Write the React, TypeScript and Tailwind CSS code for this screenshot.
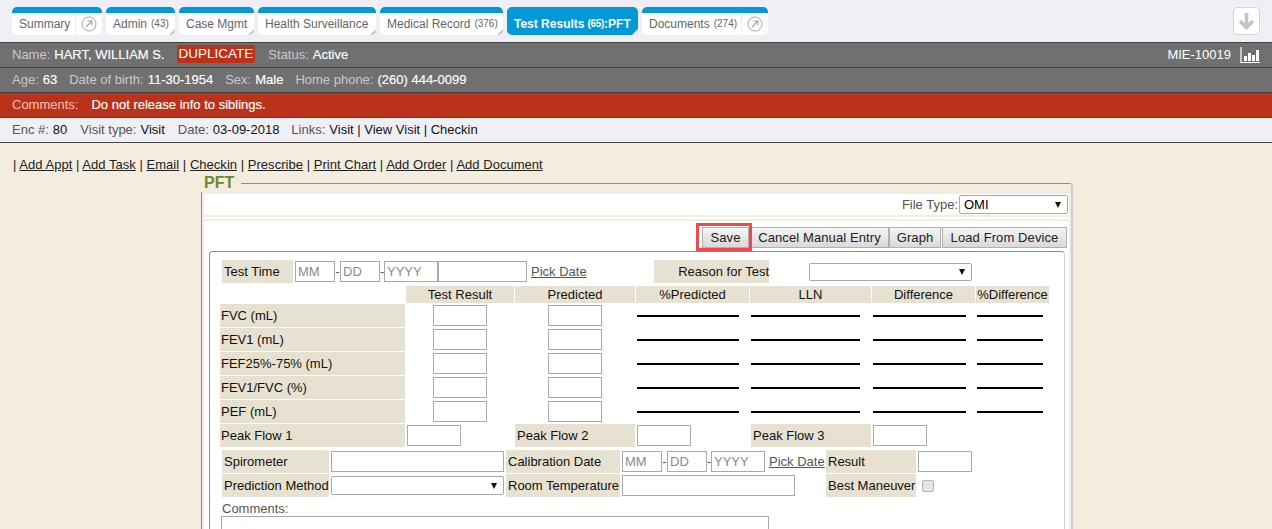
import type { ReactNode } from "react";

const tabs = [
  { name: "Summary", link: true, width: "w-[90px]" },
  { name: "Admin", count: "(43)", width: "w-[69px]" },
  { name: "Case Mgmt", width: "w-[75px]" },
  { name: "Health Surveillance", width: "w-[118px]" },
  { name: "Medical Record", count: "(376)", width: "w-[123px]" },
  { name: "Test Results", count: "(65)", suffix: ":PFT", active: true, width: "w-[131px]" },
  { name: "Documents", count: "(274)", link: true, width: "w-[126px]" },
];

const measures = ["FVC (mL)", "FEV1 (mL)", "FEF25%-75% (mL)", "FEV1/FVC (%)", "PEF (mL)"];

function LinkIcon() {
  return (
    <svg width="16" height="16" viewBox="0 0 16 16" fill="none" stroke="#a3a3a3">
      <circle cx="8" cy="8" r="7" strokeWidth="1" />
      <path d="M5 11 L11 5 M6.5 5 H11 V9.5" strokeWidth="1.1" />
    </svg>
  );
}

function Tab({ tab }: { tab: (typeof tabs)[number] }) {
  return (
    <div
      className={`relative flex h-[28px] shrink-0 items-center overflow-hidden rounded-[5px] border-t-[6px] border-[#0398d8] ${tab.width} ${
        tab.active ? "bg-[#0398d8] font-bold text-white" : "bg-white text-[#666]"
      }`}
    >
      <div className="flex h-full flex-1 items-center whitespace-nowrap pb-[1px] pl-[7px]">
        {tab.name}
        {tab.count && <span className={`text-[10px] ${tab.active ? "ml-[3px] tracking-[-0.3px]" : "ml-[4px]"}`}>{tab.count}</span>}
        {tab.suffix}
      </div>
      {tab.link ? (
        <div className="flex h-full w-[27px] items-center justify-center border-l border-[#ececec]">
          <LinkIcon />
        </div>
      ) : (
        <svg className="absolute bottom-0 right-0" width="6" height="6" viewBox="0 0 6 6">
          <path d="M6 0 V6 H0 Z" fill={tab.active ? "#fff" : "#c4c4c4"} />
        </svg>
      )}
    </div>
  );
}

function Val({ children }: { children: ReactNode }) {
  return <span className="ml-[4px] text-white [-webkit-text-stroke:0.15px_#fff]">{children}</span>;
}

function Label({ className = "", children }: { className?: string; children: ReactNode }) {
  return (
    <div className={`flex h-[23px] shrink-0 items-center whitespace-nowrap bg-[#e7e1d1] pl-[2px] text-[#111] ${className}`}>
      {children}
    </div>
  );
}

function Field({ className = "", placeholder }: { className?: string; placeholder?: string }) {
  return (
    <input
      placeholder={placeholder}
      className={`h-[21px] shrink-0 border border-[#a9a9a9] bg-white px-[2px] text-[13px] outline-none placeholder:text-[#8a8a8a] ${className}`}
    />
  );
}

function Picker({ className = "", value }: { className?: string; value?: string }) {
  return (
    <div className={`relative shrink-0 ${className}`}>
      <select className="h-full w-full appearance-none rounded-[2px] border border-[#a9a9a9] bg-white pl-[4px] text-[13px] text-black outline-none">
        {value && <option>{value}</option>}
      </select>
      <svg className="absolute right-[7px] top-1/2 -translate-y-1/2" width="6" height="6" viewBox="0 0 6 6">
        <path d="M0 0 H6 L3 6 Z" fill="#111" />
      </svg>
    </div>
  );
}

function DateFields() {
  return (
    <>
      <Field className="ml-[2px] w-[40px]" placeholder="MM" />
      <span className="w-[5px] text-center text-[#555]">-</span>
      <Field className="w-[40px]" placeholder="DD" />
      <span className="w-[4px] text-center text-[#555]">-</span>
      <Field className="w-[54px]" placeholder="YYYY" />
    </>
  );
}

function ActionButton({ className = "", children }: { className?: string; children: ReactNode }) {
  return (
    <button className={`h-[21px] shrink-0 border border-[#b0b0b0] bg-gradient-to-b from-[#f5f5f5] to-[#d9d9d9] text-[13px] tracking-[0.1px] text-[#222] ${className}`}>
      {children}
    </button>
  );
}

export default function App() {
  return (
    <div className="h-[529px] w-[1272px] overflow-hidden bg-[#f4ecdf] font-['Liberation_Sans',Arial,sans-serif] text-[13px] leading-none">
      {/* Tabs */}
      <div className="flex h-[42px] items-start bg-[#efeff5] pl-[12px] pt-[7px] text-[12px]">
        <div className="flex gap-[4px]">
          {tabs.map((tab) => (
            <Tab key={tab.name} tab={tab} />
          ))}
        </div>
        <div className="ml-auto mr-[12px] flex h-[28px] w-[27px] items-center justify-center rounded-[4px] border border-[#d4d4d4] bg-white">
          <svg width="17" height="18" viewBox="0 0 17 18" fill="none" stroke="#c4c4c4" strokeWidth="3.6">
            <path d="M8.5 1 V15 M2 9 L8.5 15.5 L15 9" />
          </svg>
        </div>
      </div>

      {/* Patient banner */}
      <div className="flex h-[25px] items-center border-t border-[#444] bg-[#707070] pb-[2px] pl-[12px] pr-[12px] text-[#c9c9c9]">
        Name:
        <Val>HART, WILLIAM S.</Val>
        <span className="ml-[12px] rounded-[3px] bg-[#bc311a] px-[2px] py-[2px] text-[13.5px] text-white">DUPLICATE</span>
        <span className="ml-[13px]">Status:</span>
        <Val>Active</Val>
        <span className="ml-auto text-white">MIE-10019</span>
        <svg className="ml-[9px] mt-[2px]" width="20" height="17" viewBox="0 0 20 17" fill="none">
          <path d="M1 0 V15.5 H20" stroke="#fff" strokeWidth="1.2" />
          <path d="M4 14 V9 H7 V14 Z M8 14 V6 H11 V14 Z M12 14 V8 H15 V14 Z M16 14 V3 H19 V14 Z" fill="#fff" />
        </svg>
      </div>
      <div className="flex h-[25px] items-center border-t border-[#444] bg-[#707070] pb-[2px] pl-[12px] text-[#c9c9c9]">
        Age:
        <Val>63</Val>
        <span className="ml-[12px]">Date of birth:</span>
        <Val>11-30-1954</Val>
        <span className="ml-[12px]">Sex:</span>
        <Val>Male</Val>
        <span className="ml-[12px]">Home phone:</span>
        <Val>(260) 444-0099</Val>
      </div>
      <div className="flex h-[25px] items-center border-t border-[#444] bg-[#bc311a] pb-[2px] pl-[12px] text-[#f3c4b8]">
        Comments:
        <span className="ml-[13px] text-white [-webkit-text-stroke:0.15px_#fff]">Do not release info to siblings.</span>
      </div>
      <div className="flex h-[26px] items-center border-y border-[#444] bg-[#efeff5] pb-[2px] pl-[12px] text-[#555]">
        Enc #:
        <span className="ml-[4px] text-[#111]">80</span>
        <span className="ml-[13px]">Visit type:</span>
        <span className="ml-[4px] text-[#111]">Visit</span>
        <span className="ml-[13px]">Date:</span>
        <span className="ml-[4px] text-[#111]">03-09-2018</span>
        <span className="ml-[12px]">Links:</span>
        <span className="ml-[4px] text-[#111]">Visit | View Visit | Checkin</span>
      </div>

      {/* Quick links */}
      <div className="flex h-[40px] items-end pb-[12px] pl-[13px] tracking-[0.03px] text-[#222]">
        <span className="whitespace-pre">
          {"| "}
          <u>Add Appt</u>
          {" | "}
          <u>Add Task</u>
          {" | "}
          <u>Email</u>
          {" | "}
          <u>Checkin</u>
          {" | "}
          <u>Prescribe</u>
          {" | "}
          <u>Print Chart</u>
          {" | "}
          <u>Add Order</u>
          {" | "}
          <u>Add Document</u>
        </span>
      </div>

      {/* PFT panel */}
      <div className="relative ml-[201px] w-[872px] rounded-tr-[4px] border-l border-r-2 border-t border-[#8c8c8c] border-r-[#cfcfcf] px-[2px] pt-[10px]">
        <div className="absolute left-[-1px] top-[-10px] bg-[#f4ecdf] pl-[3px] pr-[7px] text-[16px] font-bold leading-[18px] text-[#6b8a2c]">
          PFT
        </div>
        <div className="flex h-[21px] items-center justify-end bg-white pr-[1px] text-[#555]">
          File Type:
          <Picker className="ml-[1px] h-[19px] w-[109px]" value="OMI" />
        </div>
        <div className="h-[2px]" />
        <div className="h-[2px] bg-white" />
        <div className="h-[2px]" />

        <div className="bg-white pb-[40px]">
          <div className="flex h-[27px] items-end justify-end pr-[2px]">
            <div className="relative flex">
              <ActionButton className="mr-[1px] w-[47px]">Save</ActionButton>
              <div className="absolute left-[-6px] top-[-4px] h-[28px] w-[56px] border-[3px] border-[#f0484e]" />
              <ActionButton className="w-[139px]">Cancel Manual Entry</ActionButton>
              <ActionButton className="mr-[1px] w-[52px]">Graph</ActionButton>
              <ActionButton className="w-[125px]">Load From Device</ActionButton>
            </div>
          </div>

          <div className="ml-[5px] mr-[4px] mt-[3px] rounded-[4px] border border-[#8c8c8c] border-r-[#cfcfcf] pt-[8px] text-[#111]">
            {/* Test time */}
            <div className="flex h-[23px] items-center pl-[12px]">
              <Label className="w-[71px]">Test Time</Label>
              <DateFields />
              <Field className="w-[89px]" />
              <u className="ml-[4px] w-[55px] shrink-0 whitespace-nowrap text-[#555]">Pick Date</u>
              <Label className="ml-[68px] w-[115px] justify-end pl-0">Reason for Test</Label>
              <Picker className="ml-[40px] h-[18px] w-[163px]" />
            </div>

            {/* Column heads */}
            <div className="mt-[3px] flex h-[17px] gap-[1px] pl-[196px] text-center">
              <div className="flex w-[108px] items-center justify-center bg-[#e7e1d1]">Test Result</div>
              <div className="flex w-[120px] items-center justify-center bg-[#e7e1d1]">Predicted</div>
              <div className="flex w-[113px] items-center justify-center bg-[#e7e1d1]">%Predicted</div>
              <div className="flex w-[121px] items-center justify-center bg-[#e7e1d1]">LLN</div>
              <div className="flex w-[103px] items-center justify-center bg-[#e7e1d1]">Difference</div>
              <div className="flex w-[73px] items-center justify-center bg-[#e7e1d1]">%Difference</div>
            </div>

            {/* Measures */}
            <div className="mt-[1px] flex flex-col gap-[1px] pl-[10px]">
              {measures.map((m) => (
                <div key={m} className="flex h-[23px] items-center">
                  <Label className="w-[185px] !pl-[1px]">{m}</Label>
                  <Field className="ml-[28px] w-[54px]" />
                  <Field className="ml-[61px] w-[54px]" />
                  <div className="ml-[35px] h-[2px] w-[102px] bg-black" />
                  <div className="ml-[12px] h-[2px] w-[109px] bg-black" />
                  <div className="ml-[13px] h-[2px] w-[93px] bg-black" />
                  <div className="ml-[11px] h-[2px] w-[66px] bg-black" />
                </div>
              ))}
              <div className="flex h-[23px] items-center">
                <Label className="w-[185px] !pl-[1px]">Peak Flow 1</Label>
                <Field className="ml-[2px] w-[54px]" />
                <Label className="ml-[54px] w-[120px]">Peak Flow 2</Label>
                <Field className="ml-[2px] w-[54px]" />
                <Label className="ml-[60px] w-[120px]">Peak Flow 3</Label>
                <Field className="ml-[2px] w-[54px]" />
              </div>
            </div>

            {/* Device */}
            <div className="mt-[3px] flex flex-col gap-[1px] pl-[12px]">
              <div className="flex h-[23px] items-center">
                <Label className="w-[107px]">Spirometer</Label>
                <Field className="ml-[2px] w-[173px]" />
                <Label className="ml-[2px] w-[114px]">Calibration Date</Label>
                <DateFields />
                <u className="ml-[4px] w-[55px] shrink-0 whitespace-nowrap text-[#555]">Pick Date</u>
                <Label className="ml-[2px] w-[90px]">Result</Label>
                <Field className="ml-[2px] w-[54px]" />
              </div>
              <div className="flex h-[23px] items-center">
                <Label className="w-[107px]">Prediction Method</Label>
                <Picker className="ml-[2px] h-[19px] w-[173px]" />
                <Label className="ml-[2px] w-[114px]">Room Temperature</Label>
                <Field className="ml-[2px] w-[173px]" />
                <Label className="ml-[31px] w-[90px]">Best Maneuver</Label>
                <input
                  type="checkbox"
                  className="ml-[6px] h-[12px] w-[12px] appearance-none rounded-[2px] border border-[#b5b5b5] bg-[#e6e6e6]"
                />
              </div>
            </div>

            <div className="ml-[12px] mt-[5px] h-[14px] leading-[14px] text-[#555]">Comments:</div>
            <textarea className="ml-[11px] block h-[60px] w-[548px] border border-[#a9a9a9] bg-white outline-none" />
          </div>
        </div>
      </div>
    </div>
  );
}
